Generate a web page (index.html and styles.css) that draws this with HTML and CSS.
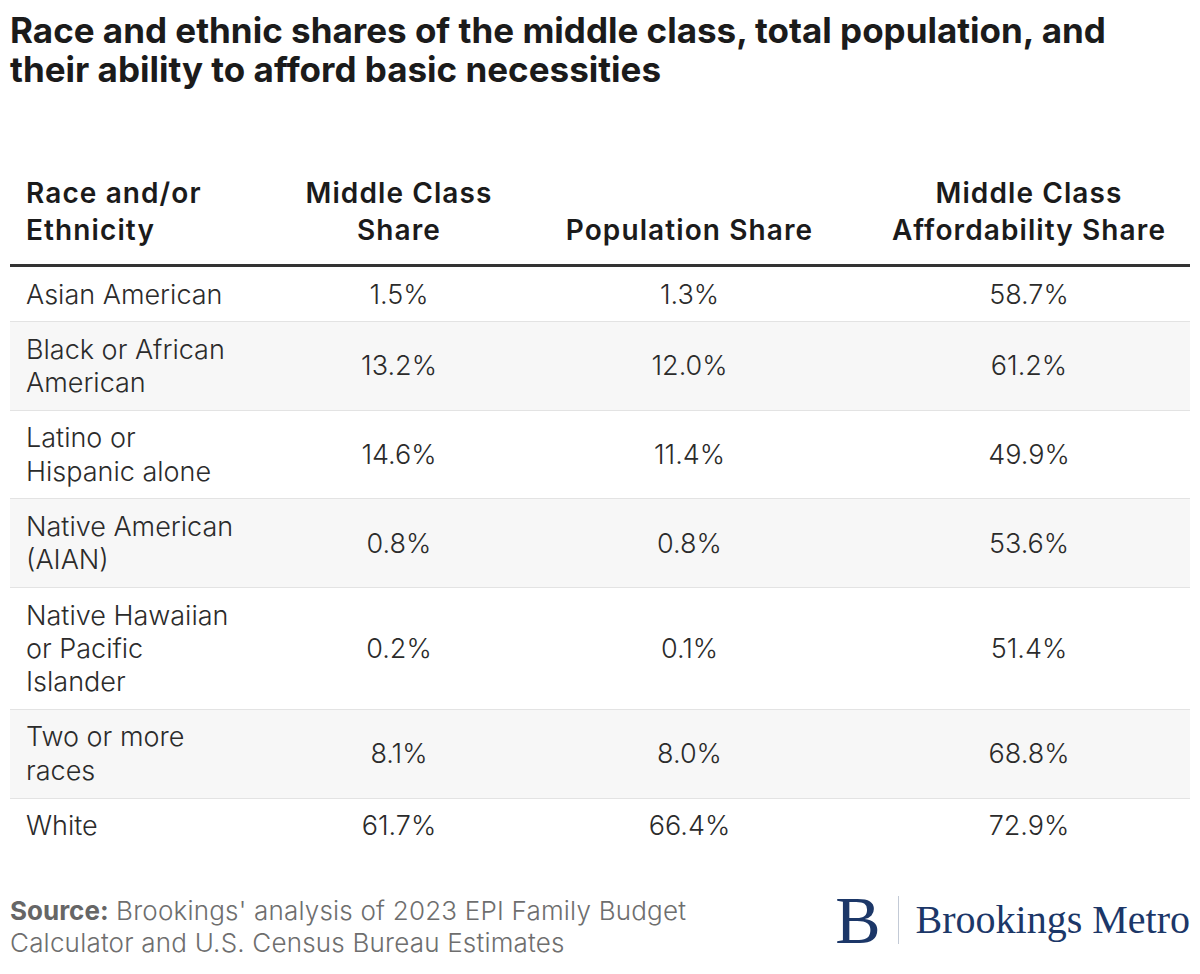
FILE: index.html
```html
<!DOCTYPE html>
<html lang="en">
<head>
<meta charset="utf-8">
<title>Race and ethnic shares of the middle class</title>
<link rel="stylesheet" href="styles.css">
</head>
<body>
<div class="chart">
  <h1 class="title">Race and ethnic shares of the middle class, total population, and their ability to afford basic necessities</h1>
  <table class="data">
    <colgroup>
      <col class="c1"><col class="c2"><col class="c3"><col class="c4">
    </colgroup>
    <thead>
      <tr>
        <th class="left">Race and/or<br>Ethnicity</th>
        <th>Middle Class<br>Share</th>
        <th>Population Share</th>
        <th>Middle Class<br>Affordability Share</th>
      </tr>
    </thead>
    <tbody>
      <tr><td class="left">Asian American</td><td>1.5%</td><td>1.3%</td><td>58.7%</td></tr>
      <tr><td class="left">Black or African<br>American</td><td>13.2%</td><td>12.0%</td><td>61.2%</td></tr>
      <tr><td class="left">Latino or<br>Hispanic alone</td><td>14.6%</td><td>11.4%</td><td>49.9%</td></tr>
      <tr><td class="left">Native American<br>(AIAN)</td><td>0.8%</td><td>0.8%</td><td>53.6%</td></tr>
      <tr><td class="left">Native Hawaiian<br>or Pacific<br>Islander</td><td>0.2%</td><td>0.1%</td><td>51.4%</td></tr>
      <tr><td class="left">Two or more<br>races</td><td>8.1%</td><td>8.0%</td><td>68.8%</td></tr>
      <tr><td class="left">White</td><td>61.7%</td><td>66.4%</td><td>72.9%</td></tr>
    </tbody>
  </table>
  <div class="footer">
    <p class="source"><b>Source:</b> Brookings' analysis of 2023 EPI Family Budget<br>Calculator and U.S. Census Bureau Estimates</p>
    <div class="logo">
      <span class="logo-b">B</span>
      <span class="logo-sep"></span>
      <span class="logo-name">Brookings Metro</span>
    </div>
  </div>
</div>
</body>
</html>
```
FILE: styles.css
```css
html, body {
  margin: 0;
  padding: 0;
  background: #ffffff;
}
body {
  font-family: Inter, "Liberation Sans", sans-serif;
  color: #2b2b2b;
}
.chart {
  width: 1180px;
  padding: 11px 10px 0 10px;
}
.title {
  margin: 0;
  font-size: 35px;
  line-height: 39px;
  font-weight: 700;
  color: #1b1b1b;
  letter-spacing: 0;
}
.data {
  width: 1180px;
  border-collapse: collapse;
  table-layout: fixed;
  margin-top: 86px;
}
.c1 { width: 277px; }
.c2 { width: 224px; }
.c3 { width: 357px; }
.c4 { width: 322px; }
.data th {
  font-size: 28px;
  line-height: 37px;
  font-weight: 600;
  letter-spacing: 1.1px;
  color: #1b1b1b;
  text-align: center;
  vertical-align: bottom;
  padding: 0 0 15px 0;
  border-bottom: 3px solid #333333;
}
.data td {
  font-size: 27px;
  line-height: 33.3px;
  font-weight: 300;
  text-align: center;
  vertical-align: middle;
  padding: 10.5px 0;
  border-top: 1px solid #e3e3e3;
}
.data tbody tr:first-child td {
  border-top: none;
}
.data tbody tr:nth-child(even) td {
  background: #f7f7f7;
}
.data .left {
  text-align: left;
  padding-left: 16px;
}
.footer {
  display: flex;
  justify-content: space-between;
  align-items: flex-start;
  margin-top: 42px;
}
.source {
  margin: 0;
  font-size: 26px;
  line-height: 32px;
  font-weight: 300;
  letter-spacing: 0.2px;
  color: #6e6e6e;
}
.source b {
  font-weight: 700;
  letter-spacing: 0;
  color: #666666;
}
.logo {
  display: flex;
  align-items: center;
  gap: 17px;
  margin-top: -2px;
  font-family: "Liberation Serif", "DejaVu Serif", serif;
  color: #1c3768;
}
.logo-b {
  font-size: 68px;
  line-height: 54px;
}
.logo-sep {
  width: 1px;
  height: 48px;
  background: #c3cad6;
}
.logo-name {
  font-size: 40px;
  line-height: 48px;
}
```
